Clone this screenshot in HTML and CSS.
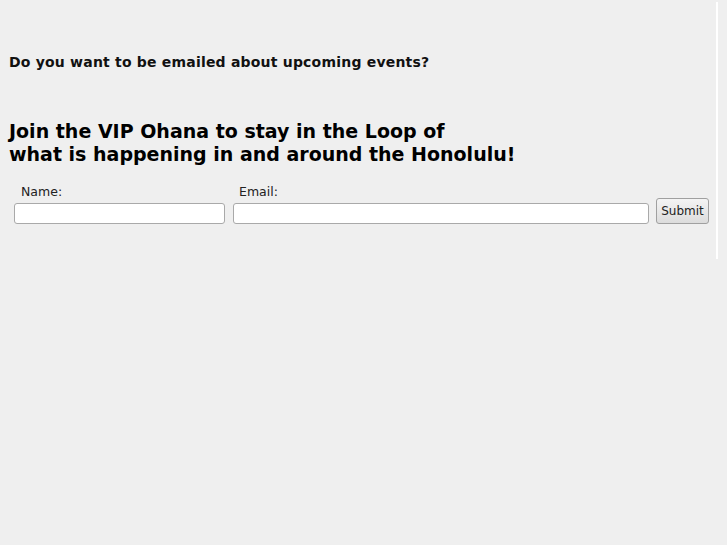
FILE: index.html
```html
<!DOCTYPE html>
<html>
<head>
<meta charset="utf-8">
<link rel="stylesheet" href="styles.css">
</head>
<body>
<div class="page">
  <div class="content">
    <p class="question">Do you want to be emailed about upcoming events?</p>
    <h2 class="title">Join the VIP Ohana to stay in the Loop of<br>what is happening in and around the Honolulu!</h2>
    <form class="signup">
      <div class="field name-field">
        <label class="label">Name:</label>
        <input class="input" type="text">
      </div>
      <div class="field email-field">
        <label class="label">Email:</label>
        <input class="input" type="text">
      </div>
      <button class="submit" type="button">Submit</button>
    </form>
  </div>
  <div class="rule"></div>
</div>
</body>
</html>
```
FILE: styles.css
```css
html, body {
  margin: 0;
  padding: 0;
  background: #efefef;
}
body {
  font-family: "DejaVu Sans", sans-serif;
  color: #000;
}
.page {
  display: flex;
  align-items: flex-start;
}
.content {
  width: 716px;
  padding: 0 0 0 8px;
  box-sizing: border-box;
}
.rule {
  width: 2px;
  height: 257px;
  margin-top: 2px;
  background: #ffffff;
}
.question {
  margin: 54px 0 0 1px;
  font-size: 14px;
  font-weight: bold;
  letter-spacing: 0.2px;
  line-height: 17px;
  color: #111;
}
.title {
  margin: 49px 0 0 1px;
  font-size: 19px;
  font-weight: bold;
  line-height: 23px;
  color: #000;
}
.signup {
  display: flex;
  align-items: flex-end;
  margin-top: 18px;
  padding-left: 6px;
}
.field {
  display: flex;
  flex-direction: column;
}
.label {
  font-size: 12.5px;
  line-height: 16px;
  padding-left: 7px;
  margin-bottom: 3px;
  color: #222;
}
.input {
  height: 21px;
  box-sizing: border-box;
  border: 1px solid #a9a9a9;
  border-radius: 3px;
  background: #fff;
  margin: 0;
  padding: 0 4px;
}
.name-field .input { width: 211px; }
.email-field { margin-left: 8px; }
.email-field .label { padding-left: 6px; }
.email-field .input { width: 416px; }
.submit {
  margin-left: 7px;
  width: 53px;
  height: 26px;
  font-family: "DejaVu Sans", sans-serif;
  font-size: 12px;
  color: #222;
  border: 1px solid #a0a0a0;
  border-radius: 3px;
  background: linear-gradient(#f4f4f4, #dcdcdc);
  padding: 0;
}
```
